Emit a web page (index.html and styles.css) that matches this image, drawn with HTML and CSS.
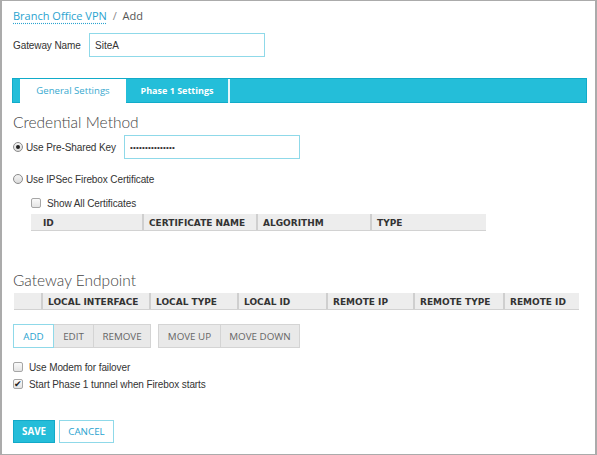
FILE: index.html
```html
<!DOCTYPE html>
<html lang="en">
<head>
    <meta charset="UTF-8">
    <title>Branch Office VPN - Add</title>
    <link rel="stylesheet" href="styles.css">
</head>
<body>
    <div class="page">
        <div class="crumbs">
            <a class="crumb-link" href="#">Branch Office VPN</a>
            <span class="crumb-sep">/</span>
            <span class="crumb-here">Add</span>
        </div>

        <div class="field-row gateway-row">
            <label class="field-label">Gateway Name</label>
            <input class="text-input gw-input" type="text" value="SiteA">
        </div>

        <div class="tab-bar">
            <div class="tab tab-active">General Settings</div>
            <div class="tab tab-other">Phase 1 Settings</div>
        </div>

        <h3 class="section-title first-title">Credential Method</h3>

        <div class="field-row psk-row">
            <span class="radio checked"></span>
            <span class="opt-label psk-label">Use Pre-Shared Key</span>
            <input class="text-input psk-input" type="text" value="•••••••••••••••">
        </div>

        <div class="field-row cert-row">
            <span class="radio"></span>
            <span class="opt-label">Use IPSec Firebox Certificate</span>
        </div>

        <div class="field-row showall-row">
            <span class="check"></span>
            <span class="opt-label">Show All Certificates</span>
        </div>

        <div class="grid-head cert-head">
            <div class="col" style="width:113px"><span class="first-pad">ID</span></div>
            <div class="col" style="width:114px">CERTIFICATE NAME</div>
            <div class="col" style="width:114px">ALGORITHM</div>
            <div class="col" style="width:114px">TYPE</div>
        </div>

        <h3 class="section-title second-title">Gateway Endpoint</h3>

        <div class="grid-head endpoint-head">
            <div class="col" style="width:29px"></div>
            <div class="col" style="width:108px">LOCAL INTERFACE</div>
            <div class="col" style="width:88px">LOCAL TYPE</div>
            <div class="col" style="width:89px">LOCAL ID</div>
            <div class="col" style="width:87px">REMOTE IP</div>
            <div class="col" style="width:90px">REMOTE TYPE</div>
            <div class="col" style="width:74px">REMOTE ID</div>
        </div>

        <div class="btn-row">
            <div class="btn-group">
                <button class="btn btn-primary-outline">ADD</button>
                <button class="btn" style="width:41px">EDIT</button>
                <button class="btn" style="width:58px">REMOVE</button>
            </div>
            <div class="btn-group">
                <button class="btn" style="width:63px">MOVE UP</button>
                <button class="btn" style="width:80px">MOVE DOWN</button>
            </div>
        </div>

        <div class="field-row modem-row">
            <span class="check"></span>
            <span class="opt-label">Use Modem for failover</span>
        </div>
        <div class="field-row start-row">
            <span class="check checked">&#10004;</span>
            <span class="opt-label">Start Phase 1 tunnel when Firebox starts</span>
        </div>

        <div class="footer-btns">
            <button class="save-btn">SAVE</button>
            <button class="cancel-btn">CANCEL</button>
        </div>
    </div>
</body>
</html>
```

FILE: styles.css
```css
body {
    margin: 0;
    background-color: white;
}
.page {
    box-sizing: border-box;
    width: 597px;
    height: 455px;
    border: 1px solid #ababab;
    border-left-width: 2px;
    border-right-width: 2px;
    padding: 0 0 0 11px;
    font-family: "Liberation Sans", Arial, sans-serif;
    font-size: 10px;
    letter-spacing: -0.1px;
    color: #333;
    overflow: hidden;
}
.crumbs {
    margin-top: 7px;
    height: 16px;
    line-height: 16px;
    font-family: "Open Sans", sans-serif;
    font-size: 11px;
    letter-spacing: 0;
    color: #555;
}
.crumb-link {
    color: #2aa3cf;
    text-decoration: underline dotted #2aa3cf;
    text-underline-offset: 3px;
}
.crumb-sep {
    color: #888;
    margin: 0 3px;
}
.field-row {
    display: flex;
    align-items: center;
}
.gateway-row {
    margin-top: 9px;
    height: 24px;
}
.field-label {
    width: 76px;
    color: #333;
}
.text-input {
    box-sizing: border-box;
    height: 24px;
    border: 1px solid #8fd9e9;
    padding: 0 5px;
    font-family: "Liberation Sans", Arial, sans-serif;
    font-size: 10px;
    color: #333;
    outline: none;
}
.gw-input {
    width: 176px;
}
.tab-bar {
    box-sizing: border-box;
    display: flex;
    margin-top: 21px;
    margin-left: -1px;
    width: 575px;
    height: 25px;
    background: #24bed9;
    border: 1px solid #11abc9;
    padding-left: 7px;
}
.tab {
    box-sizing: border-box;
    height: 24px;
    line-height: 23px;
    text-align: center;
    font-family: "Open Sans", sans-serif;
    letter-spacing: 0;
}
.tab-active {
    width: 106px;
    background: white;
    color: #38a9cf;
    font-size: 9.6px;
}
.tab-other {
    width: 104px;
    color: white;
    font-weight: bold;
    font-size: 9px;
    border-right: 2px solid #e6f7fb;
}
.section-title {
    margin: 0;
    height: 20px;
    line-height: 20px;
    font-family: Lato, sans-serif;
    font-weight: 300;
    font-size: 15.5px;
    letter-spacing: 0;
    color: #444;
}
.first-title {
    margin-top: 9px;
}
.second-title {
    margin-top: 39px;
}
.psk-row {
    margin-top: 3px;
    height: 24px;
}
.psk-label {
    width: 98px;
}
.psk-input {
    width: 176px;
    font-size: 8px;
    letter-spacing: 0.2px;
}
.cert-row {
    margin-top: 12px;
    height: 16px;
}
.showall-row {
    margin-top: 8px;
    height: 16px;
    padding-left: 18px;
}
.radio {
    box-sizing: border-box;
    width: 10px;
    height: 10px;
    border-radius: 50%;
    border: 1px solid #8a8a8a;
    background: linear-gradient(#f4f4f4, #dcdcdc);
    margin-right: 3px;
    position: relative;
}
.radio.checked::after {
    content: "";
    position: absolute;
    left: 2px;
    top: 2px;
    width: 4px;
    height: 4px;
    border-radius: 50%;
    background: #222;
}
.check {
    box-sizing: border-box;
    width: 10px;
    height: 10px;
    border: 1px solid #a6a6a6;
    border-radius: 2px;
    background: linear-gradient(#fafafa, #e4e4e4);
    margin-right: 6px;
    font-size: 9px;
    line-height: 8px;
    text-align: center;
    color: #222;
    overflow: hidden;
}
.opt-label {
    color: #333;
}
.grid-head {
    display: flex;
    height: 17px;
    background: #ededed;
    border-bottom: 1px solid #d2d2d2;
    box-sizing: border-box;
    font-family: "DejaVu Sans", Verdana, sans-serif;
    font-weight: bold;
    font-size: 9px;
    letter-spacing: 0;
    color: #333;
}
.grid-head .col {
    box-sizing: border-box;
    line-height: 18px;
    padding-left: 5px;
    border-right: 2px solid #cfcfcf;
    white-space: nowrap;
    overflow: hidden;
}
.grid-head .col:last-child {
    border-right: none;
}
.first-pad {
    padding-left: 7px;
}
.cert-head {
    margin-top: 3px;
    margin-left: 18px;
    width: 455px;
}
.endpoint-head {
    margin-top: 3px;
    margin-left: 1px;
    width: 565px;
}
.btn-row {
    display: flex;
    gap: 7px;
    margin-top: 14px;
    height: 24px;
}
.btn-group {
    display: flex;
}
.btn {
    box-sizing: border-box;
    height: 24px;
    padding: 0;
    border: 1px solid #d4d4d4;
    margin-left: -1px;
    background: #e9e9e9;
    color: #666;
    font-family: "Open Sans", sans-serif;
    font-size: 9.8px;
    cursor: pointer;
}
.btn-group .btn:first-child {
    margin-left: 0;
}
.btn-primary-outline {
    width: 41px;
    background: white;
    border-color: #8fd9e9;
    color: #2aa3cf;
    position: relative;
}
.modem-row {
    margin-top: 11px;
    height: 16px;
}
.start-row {
    margin-top: 1px;
    height: 16px;
}
.footer-btns {
    display: flex;
    gap: 4px;
    margin-top: 28px;
}
.save-btn {
    box-sizing: border-box;
    width: 42px;
    height: 23px;
    border: 1px solid #12a9c8;
    background: #25bdd9;
    color: white;
    font-family: "Open Sans", sans-serif;
    font-weight: bold;
    font-size: 9.8px;
    padding: 0;
}
.cancel-btn {
    box-sizing: border-box;
    width: 55px;
    height: 23px;
    border: 1px solid #8fd9e9;
    background: white;
    color: #2aa3cf;
    font-family: "Open Sans", sans-serif;
    font-size: 9.8px;
    padding: 0;
}
```
